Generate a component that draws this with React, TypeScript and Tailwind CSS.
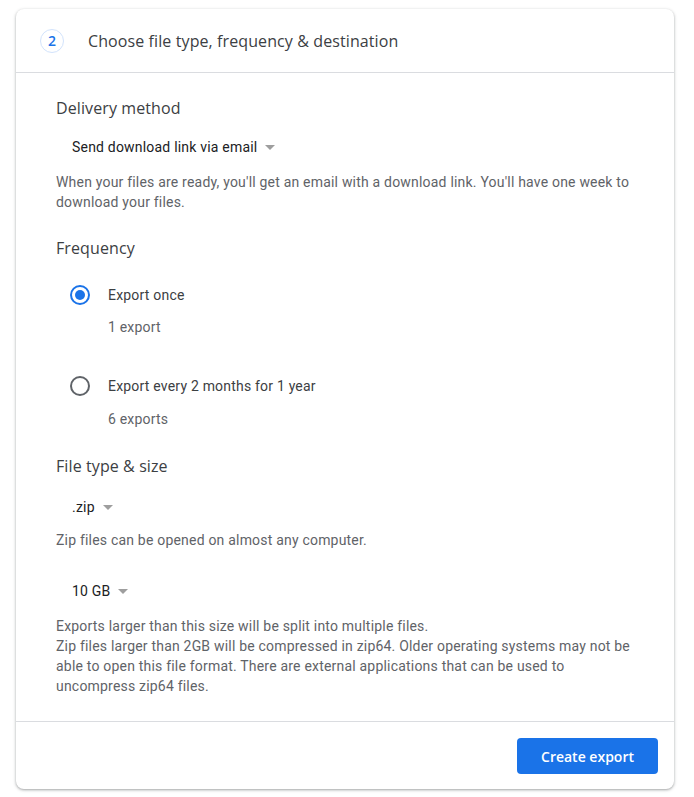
import React from "react";

const roboto = { fontFamily: "Roboto, 'Liberation Sans', sans-serif" };

function Caret() {
  return (
    <span className="ml-[8px] inline-block h-0 w-0 border-x-[5px] border-t-[5px] border-x-transparent border-t-[#9e9e9e]" />
  );
}

function Dropdown({ label, className }: { label: string; className?: string }) {
  return (
    <div className={"flex items-center pl-[16px] text-[14px] leading-[20px] tracking-[0.2px] text-[#202124] " + (className ?? "")}>
      <span>{label}</span>
      <Caret />
    </div>
  );
}

function Radio({ checked }: { checked: boolean }) {
  return (
    <span
      className={
        "flex h-[20px] w-[20px] items-center justify-center rounded-full border-2 " +
        (checked ? "border-[#1a73e8]" : "border-[#5f6368]")
      }
    >
      {checked && <span className="h-[10px] w-[10px] rounded-full bg-[#1a73e8]" />}
    </span>
  );
}

export default function App() {
  return (
    <div className="min-h-[797px] bg-white pt-[9px] pl-[16px]" style={roboto}>
      <div className="w-[658px] rounded-[8px] bg-white shadow-[0_1px_2px_0_rgba(60,64,67,0.3),0_1px_3px_1px_rgba(60,64,67,0.15)]">
        {/* Header */}
        <div className="flex h-[64px] items-center border-b border-[#dadce0] pl-[24px]">
          <span
            className="flex h-[24px] w-[24px] items-center justify-center rounded-full border border-[#d2e3fc] text-[14px] font-semibold text-[#1a73e8]"
            style={{ fontFamily: "'Open Sans', sans-serif" }}
          >
            2
          </span>
          <span
            className="ml-[24px] text-[16px] tracking-[0.1px] text-[#3c4043]"
            style={{ fontFamily: "'Open Sans', sans-serif" }}
          >
            Choose file type, frequency &amp; destination
          </span>
        </div>

        {/* Body */}
        <div className="border-b border-[#dadce0] pl-[40px] pr-[40px] pt-[23px] pb-[25px]">
          <div className="text-[16px] leading-[24px] tracking-[0.1px] text-[#3c4043]" style={{ fontFamily: "'Open Sans', sans-serif" }}>
            Delivery method
          </div>
          <Dropdown label="Send download link via email" className="mt-[17px]" />
          <p className="mt-[15px] text-[14px] leading-[20px] tracking-[0.2px] text-[#5f6368]">
            When your files are ready, you'll get an email with a download link. You'll have one week to download your files.
          </p>

          <div className="mt-[24px] text-[16px] leading-[24px] tracking-[0.1px] text-[#3c4043]" style={{ fontFamily: "'Open Sans', sans-serif" }}>
            Frequency
          </div>
          <div className="mt-[25px] flex items-center pl-[14px]">
            <Radio checked />
            <span className="ml-[18px] text-[14px] leading-[20px] tracking-[0.2px] text-[#3c4043]">Export once</span>
          </div>
          <div className="mt-[12px] pl-[52px] text-[14px] leading-[20px] tracking-[0.2px] text-[#5f6368]">1 export</div>
          <div className="mt-[39px] flex items-center pl-[14px]">
            <Radio checked={false} />
            <span className="ml-[18px] text-[14px] leading-[20px] tracking-[0.2px] text-[#3c4043]">Export every 2 months for 1 year</span>
          </div>
          <div className="mt-[13px] pl-[52px] text-[14px] leading-[20px] tracking-[0.2px] text-[#5f6368]">6 exports</div>

          <div className="mt-[25px] text-[16px] leading-[24px] tracking-[0.1px] text-[#3c4043]" style={{ fontFamily: "'Open Sans', sans-serif" }}>
            File type &amp; size
          </div>
          <Dropdown label=".zip" className="mt-[19px]" />
          <p className="mt-[13px] text-[14px] leading-[20px] tracking-[0.2px] text-[#5f6368]">Zip files can be opened on almost any computer.</p>
          <Dropdown label="10 GB" className="mt-[31px]" />
          <p className="mt-[15px] text-[14px] leading-[20px] tracking-[0.2px] text-[#5f6368]">
            Exports larger than this size will be split into multiple files.
            <br />
            Zip files larger than 2GB will be compressed in zip64. Older operating systems may not be able to open this file format. There are external applications that can be used to uncompress zip64 files.
          </p>
        </div>

        {/* Footer */}
        <div className="flex justify-end pt-[16px] pb-[15px] pr-[16px]">
          <button
            className="h-[36px] w-[141px] rounded-[4px] bg-[#1a73e8] text-[14px] font-semibold text-white"
            style={{ fontFamily: "'Open Sans', sans-serif" }}
          >
            Create export
          </button>
        </div>
      </div>
    </div>
  );
}
